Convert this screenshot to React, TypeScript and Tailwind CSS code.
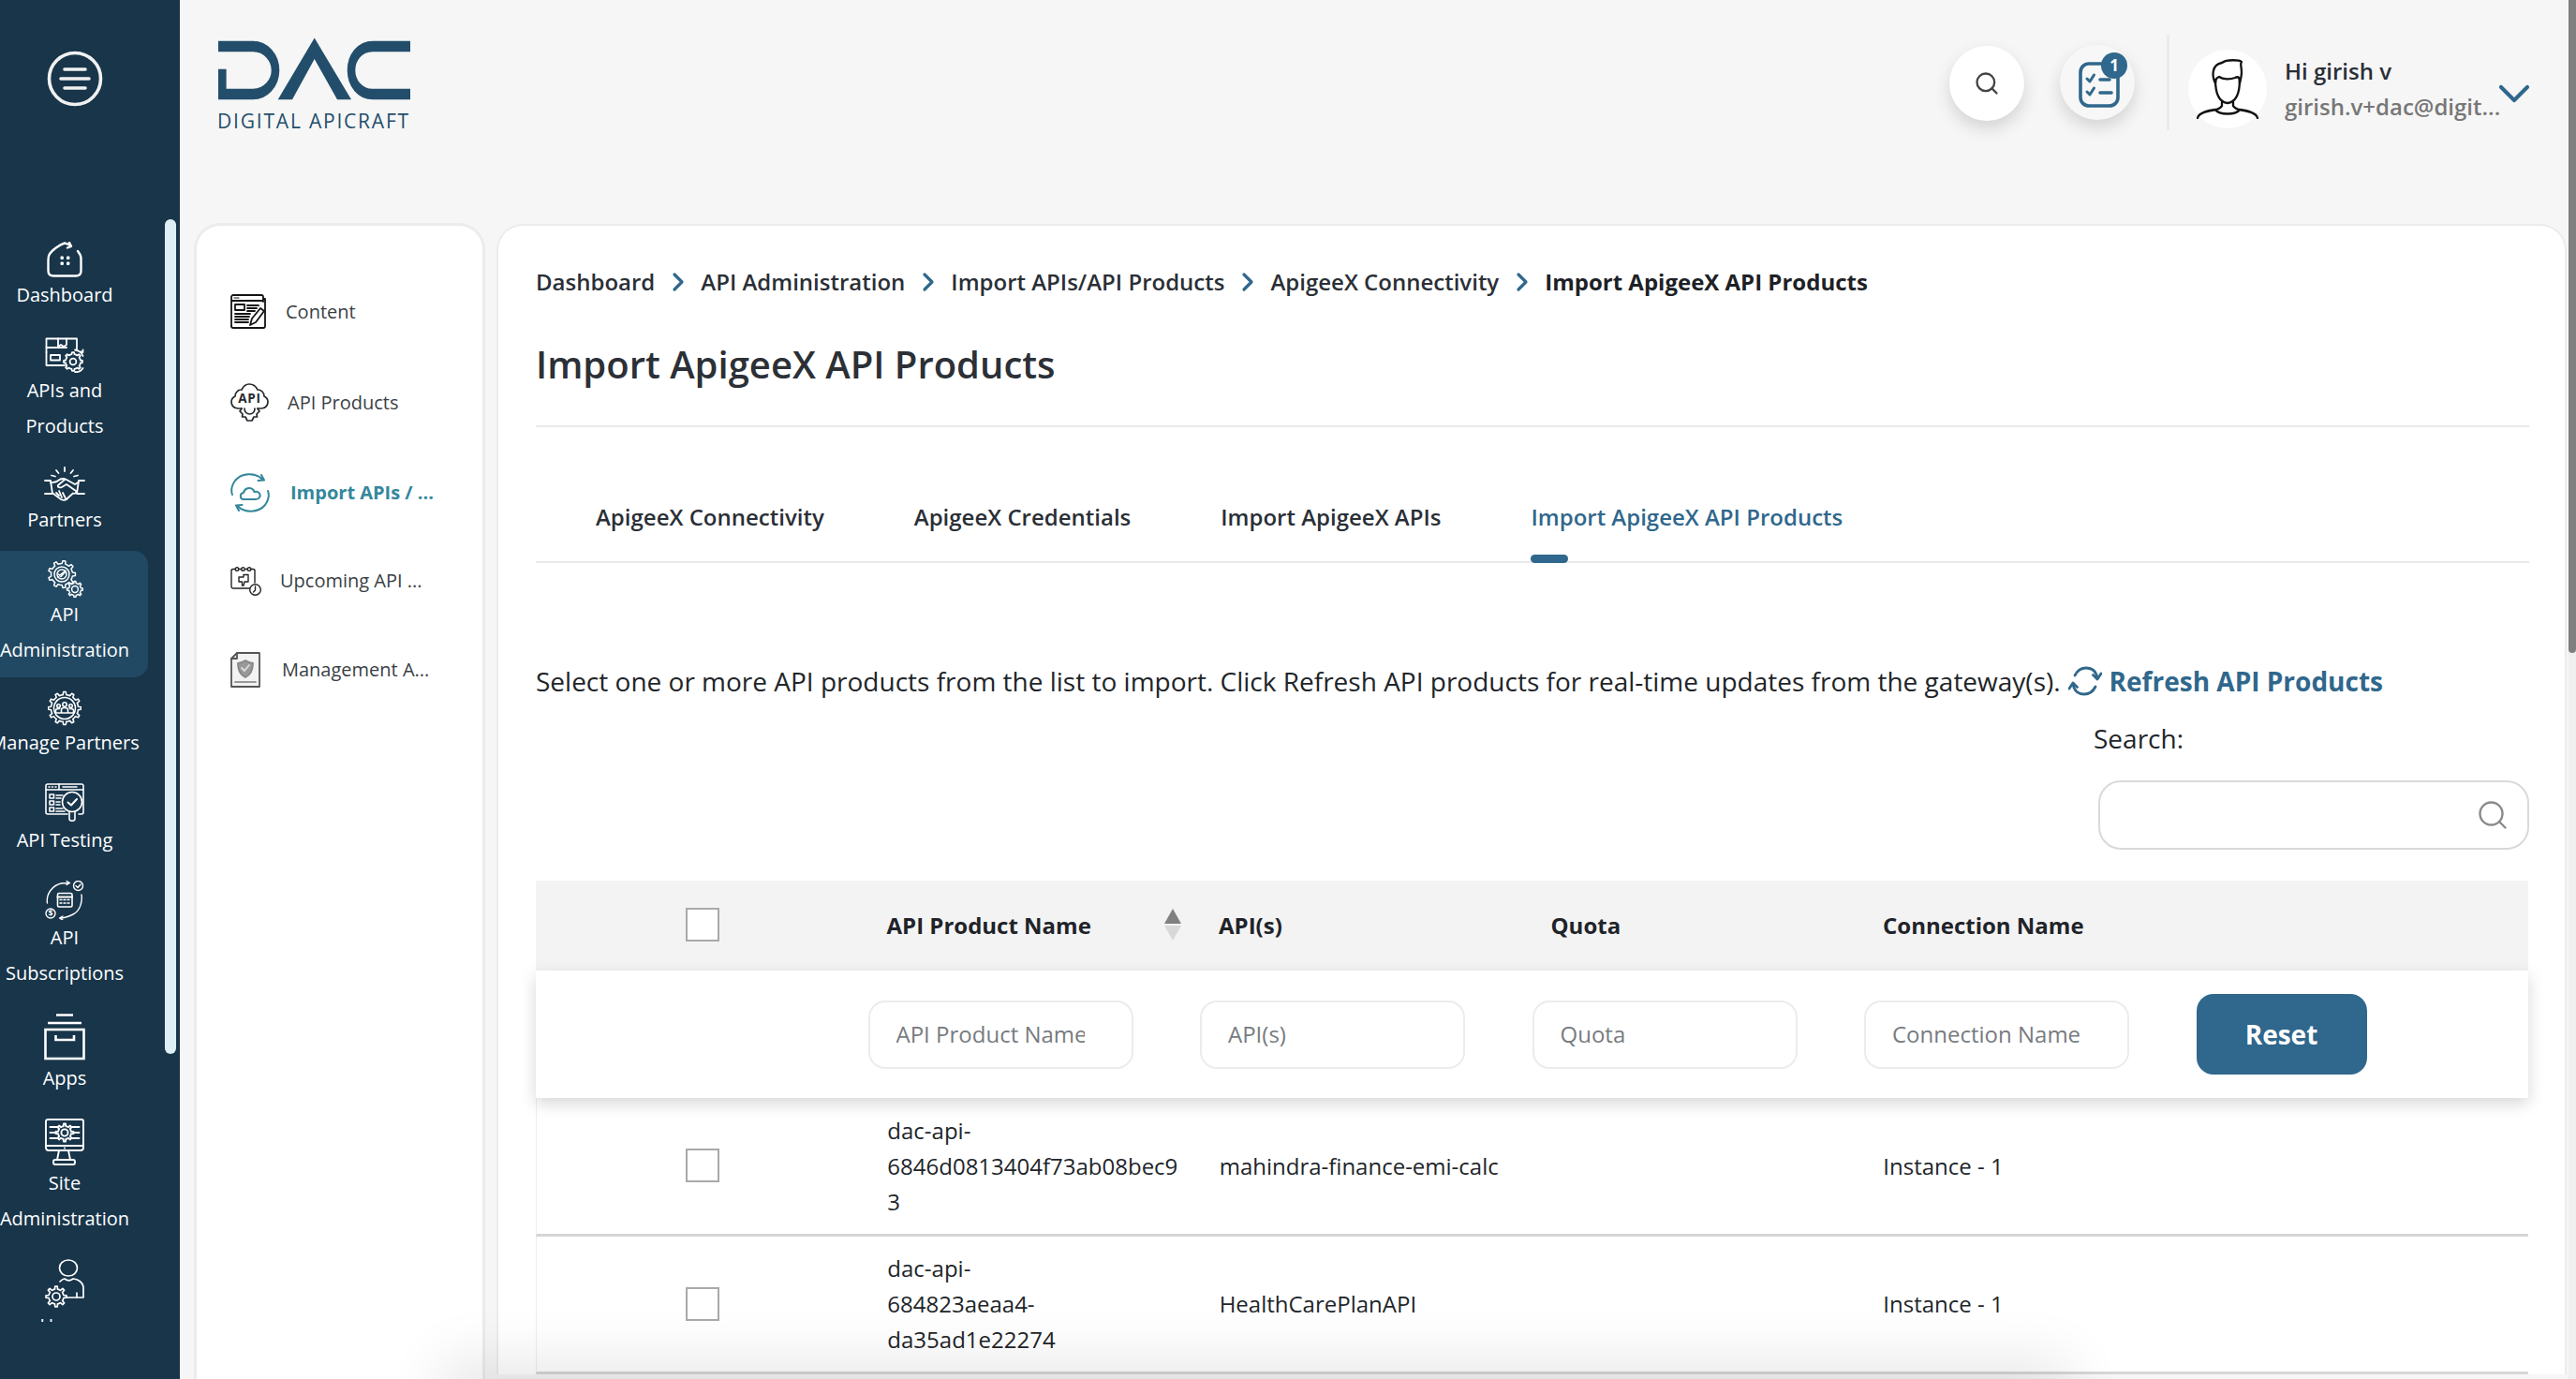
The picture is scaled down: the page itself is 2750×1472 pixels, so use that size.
import { Search, ChevronDown, ChevronRight } from "lucide-react";
import type { ReactNode } from "react";

const gear = (cx: number, cy: number, r1: number, r2: number, teeth: number) => {
  let d = "";
  const step = (Math.PI * 2) / teeth;
  for (let i = 0; i < teeth; i++) {
    const a = i * step;
    const pts = [
      [r1, a - step * 0.5],
      [r1, a - step * 0.24],
      [r2, a - step * 0.14],
      [r2, a + step * 0.14],
      [r1, a + step * 0.24],
    ];
    pts.forEach(([r, t], j) => {
      const x = (cx + r * Math.cos(t)).toFixed(2);
      const y = (cy + r * Math.sin(t)).toFixed(2);
      d += `${i === 0 && j === 0 ? "M" : "L"}${x} ${y} `;
    });
  }
  return d + "Z";
};

const Line = ({ w, h, sw = 2, c = "#fff", children }: { w: number; h: number; sw?: number; c?: string; children: ReactNode }) => (
  <svg width={w} height={h} viewBox={`0 0 ${w} ${h}`} fill="none" stroke={c} strokeWidth={sw} strokeLinecap="round" strokeLinejoin="round">
    {children}
  </svg>
);

const DashboardIcon = () => (
  <Line w={38} h={38} sw={2.4}>
    <path d="M25 4 C22 2.5 20 1.5 19 1.5 C14 3 5 9 2.5 14 C1.5 16 1.5 18 1.5 20 V31 C1.5 34.5 3.5 36.5 7 36.5 H31 C34.5 36.5 36.5 34.5 36.5 31 V18 C36.5 15 35 12.5 33 10" />
    <path d="M24 1 L26 5 L22 6.5" />
    <g fill="#fff" stroke="none">
      <rect x="14.5" y="15.5" width="3.4" height="3.4" rx="1" />
      <rect x="21" y="15.5" width="3.4" height="3.4" rx="1" />
      <rect x="14.5" y="21.5" width="3.4" height="3.4" rx="1" />
      <rect x="21" y="21.5" width="3.4" height="3.4" rx="1" />
    </g>
  </Line>
);

const ApisIcon = () => (
  <Line w={42} h={38} sw={1.8}>
    <path d="M1.5 16 V1.5 H34 V13" />
    <path d="M1.5 11 H23" />
    <path d="M14 1.5 V10 L17 8 L20 10 L23 8 V1.5" />
    <path d="M1.5 16 V30 H21" />
    <rect x="6" y="19" width="10" height="5.5" />
    <path d={gear(30, 26, 8, 10, 8)} />
    <circle cx="30" cy="26" r="3.4" />
    <path d="M32 13.5 C36 14 39.5 17 40.5 20 M38 15.5 L40.5 16 L40.5 13.5 M40.5 33 C38.5 36 35 37.5 32 37" />
  </Line>
);

const PartnersIcon = () => (
  <Line w={44} h={38} sw={1.8}>
    <path d="M22 1 V5 M13 4 L15.5 7 M31 4 L28.5 7 M8 9.5 L12 10.5 M36 9.5 L32 10.5" />
    <path d="M1 15 H7 L9 29 H1 M43 15 H37 L35 29 H43" />
    <path d="M7 17 C10 17 13 17 15 15 C18 12.5 21 12.5 24 14 L33 19 L36.5 17" />
    <path d="M22 14 L15 20 C14 22 17 23 19 22 L24 19 L34 26 C35 28 33 29.5 31 28.5 L26 33 C24 36 21 36.5 18 35 L10 29" />
    <path d="M13 28 L16 31 M16 26 L19 33 M20 28 L23 34" />
  </Line>
);

const AdminIcon = () => (
  <Line w={40} h={40} sw={1.5}>
    <path d={gear(17, 15, 11.5, 14.5, 9)} />
    <circle cx="17" cy="15" r="8" />
    <circle cx="17" cy="15" r="5" />
    <path d="M13.5 15 L16 17.5 L20.5 12.5 M12.5 18 L21 11" />
    <path d={gear(31, 31, 6.5, 8.5, 8)} fill="#224963" />
    <circle cx="31" cy="31" r="3.4" />
  </Line>
);

const ManageIcon = () => (
  <Line w={36} h={38} sw={1.6}>
    <path d={gear(18, 19, 14.5, 17.5, 12)} />
    <circle cx="18" cy="19" r="11.5" />
    <circle cx="18" cy="15" r="2.2" />
    <circle cx="11.5" cy="16.5" r="1.8" />
    <circle cx="24.5" cy="16.5" r="1.8" />
    <path d="M14.5 24 V20.5 C14.5 19 16 18.5 18 18.5 C20 18.5 21.5 19 21.5 20.5 V24 M8.5 24 V21 C8.5 19.7 10 19.5 12.5 19.5 M27.5 24 V21 C27.5 19.7 26 19.5 23.5 19.5 M8 24 H28" />
  </Line>
);

const TestingIcon = () => (
  <Line w={42} h={42} sw={1.6}>
    <path d="M24 33 H3 C2 33 1 32 1 31 V3 C1 2 2 1 3 1 H39 C40 1 41 2 41 3 V31 C41 32 40 33 39 33 H36" />
    <path d="M1 7 H41 M15 1 V7 M19 4 H34" />
    <path d="M4 4 H5 M7.5 4 H8.5 M11 4 H12" />
    <rect x="5" y="12" width="4.5" height="4" />
    <rect x="5" y="19" width="4.5" height="4" />
    <rect x="5" y="26" width="4.5" height="4" />
    <path d="M12 13 H19 M12 16 H17 M12 20 H16 M12 23 H16 M12 27 H19 M12 30 H21" />
    <circle cx="29" cy="20" r="10.5" />
    <path d="M24.5 20.5 L28 23.5 L34 17" strokeWidth="2" />
    <path d="M26 30.5 V38 C26 41 32 41 32 38 V30.5" />
  </Line>
);

const SubsIcon = () => (
  <Line w={42} h={42} sw={1.4}>
    <path d="M2.5 24 C1 14 8 5 18 2.8 L26 2.5 M23 0.5 L26.5 2.5 L23 4.5" />
    <path d="M39 15 C40 22 38 32 30 36 C24 39 20 40 16 40 M19 38 L15.5 40 L19 42" />
    <rect x="13.5" y="13.5" width="15.5" height="14.5" rx="1.5" strokeWidth="1.6" />
    <path d="M13.5 17.5 H29" strokeWidth="2" />
    <path d="M16 20.5 H18 M20 20.5 H22 M24 20.5 H26 M16 24 H18 M20 24 H22 M24 24 H26" />
    <circle cx="35.5" cy="5.5" r="5" />
    <path d="M33 5.5 L35 7.5 L38 4" />
    <circle cx="6" cy="35" r="5" />
    <text x="6" y="38.3" textAnchor="middle" fontSize="9" fontWeight="700" fill="#fff" stroke="none" fontFamily="'Open Sans', sans-serif">$</text>
  </Line>
);

const AppsIcon = () => (
  <Line w={44} h={50} sw={2.6}>
    <g strokeLinecap="butt" strokeLinejoin="miter">
      <path d="M13 1.5 H31 M4 10 H40" />
      <rect x="1.5" y="17" width="41" height="31" />
      <path d="M12.5 23 V28 H32 V23" />
    </g>
  </Line>
);

const SiteIcon = () => (
  <Line w={42} h={50} sw={1.9}>
    <path d="M3 1 H39 C40.5 1 41 2 41 3 V31 C41 33 40 34 38 34 H4 C2 34 1 33 1 31 V3 C1 2 1.5 1 3 1 Z" />
    <path d="M1 29 H41" />
    <path d="M21 31.5 V31.6" />
    <path d="M15 34 L13 44 H27 L25 34" />
    <rect x="9" y="44" width="23" height="5" rx="2" />
    <path d={gear(21, 15, 7, 9.5, 8)} />
    <circle cx="21" cy="15" r="3.6" />
    <path d="M5.5 9 H13 M5.5 15 H11 M5.5 21 H13 M29 9 H36.5 M31 15 H36.5 M29 21 H36.5" />
  </Line>
);

const UsersIcon = () => (
  <Line w={42} h={52} sw={1.7}>
    <ellipse cx="25" cy="9.5" rx="9.5" ry="8.5" />
    <path d="M16 24 C18 22 20 21 21 21 C24 23.5 27 23.5 30 21 C35 21 41 25 41 31 V41 H22" />
    <path d="M34 41 V36" />
    <path d={gear(12, 40, 8, 11, 8)} />
    <circle cx="12" cy="40" r="4" />
  </Line>
);

const navItems = [
  { label: ["Dashboard"], icon: <DashboardIcon />, h: "h-[38px]", extra: "mb-[1px]" },
  { label: ["APIs and", "Products"], icon: <ApisIcon />, h: "h-[39px]" },
  { label: ["Partners"], icon: <PartnersIcon />, h: "h-[38px]" },
  { label: ["API", "Administration"], icon: <AdminIcon />, h: "h-[39px]", active: true },
  { label: ["Manage Partners"], icon: <ManageIcon />, h: "h-[37px]" },
  { label: ["API Testing"], icon: <TestingIcon />, h: "h-[42px]" },
  { label: ["API", "Subscriptions"], icon: <SubsIcon />, h: "h-[42px]" },
  { label: ["Apps"], icon: <AppsIcon />, h: "h-[50px]" },
  { label: ["Site", "Administration"], icon: <SiteIcon />, h: "h-[50px]" },
  { label: ["Users", "Management"], icon: <UsersIcon />, h: "h-[52px]" },
];

const Sidebar = () => (
  <aside className="relative flex w-[192px] shrink-0 flex-col bg-[#18354a] text-white">
    <div className="ml-[15px] flex h-[248px] w-[162px] shrink-0 justify-center pt-[54px] pl-[1px] pr-[33px]">
      <svg width="60" height="60" viewBox="0 0 60 60" fill="none" stroke="#f1f1f1" strokeWidth="3.6" strokeLinecap="round">
        <circle cx="30" cy="30" r="27.5" />
        <path d="M19 20 H41 M15 30 H45 M19 40 H41" />
      </svg>
    </div>
    <nav className="flex h-[1163px] flex-col gap-[4px] overflow-hidden">
      {navItems.map((item) => (
        <div
          key={item.label.join(" ")}
          className={`flex w-[158px] shrink-0 flex-col items-center rounded-r-[15px] py-[10px] pr-[20px] ${item.active ? "bg-[#224963]" : ""} ${item.extra ?? ""}`}
        >
          <div className={`flex items-center justify-center ${item.h}`}>{item.icon}</div>
          {item.label.map((l) => (
            <span key={l} className="whitespace-nowrap text-[20px] leading-[38px]">{l}</span>
          ))}
        </div>
      ))}
    </nav>
    <div className="absolute left-[176px] top-[234px] h-[891px] w-[12px] rounded-full bg-[#dfeff6]" />
  </aside>
);

const ContentIcon = () => (
  <Line w={38} h={38} sw={1.8} c="#141414">
    <path d="M1 34 V3 C1 2 2 1 3 1 H33 C34 1 35 2 35 3 V8 M1 7 H35" />
    <path d="M1 34 C1 35 2 36 3 36 H35 C36 36 37 35 37 34 V5 H35 M26 36" />
    <rect x="5" y="11" width="10" height="6" />
    <path d="M18 12 H30 M18 15 H28 M18 18 H26 M5 21 H21 M5 24 H20 M5 27 H19 M5 30 H19" />
    <path d="M21 33 L23 26 L32 15 L36 18 L27 30 Z" fill="#fff" />
    <path d="M4 4 H9" strokeWidth="1.2" />
  </Line>
);

const ApiProductsIcon = () => (
  <Line w={41} h={42} sw={1.7} c="#26292c">
    <path d="M12 27 H8 C3 27 1 23 1 20 C1 17 3 15 5 14 C5 10 8 7 12 7 C14 3 17 1 20 1 C24 1 27 3 29 7 C33 7 36 10 36 14 C38 15 40 17 40 20 C40 23 38 27 33 27 H29" />
    <text x="20.5" y="20.5" textAnchor="middle" fontSize="13.5" fontWeight="700" fill="#26292c" stroke="none" letterSpacing="0.8" fontFamily="'Open Sans', sans-serif">API</text>
    <path d="M12 27 L10 30 L13 33 L12.5 36 L16 36 L18 40 L23 40 L25 36 L28.5 36 L28 33 L31 30 L29 27" />
    <path d="M15 27 C15 35 26 35 26 27" />
  </Line>
);

const ImportIcon = () => (
  <Line w={42} h={42} sw={2} c="#35879c">
    <path d="M34.5 7 C27 -1 12 -0.5 5 8 C1.5 13 0.5 19 2 23" />
    <path d="M33 2 L36 7.5 L29.5 8" strokeWidth="2" />
    <path d="M7.5 35 C15 43 30 42.5 37 34 C40.5 29 41.5 23 40 19" />
    <path d="M9 40 L6 34.5 L12.5 34" strokeWidth="2" />
    <path d="M14 28 C10 28 9.5 21.5 14 21 C15 16 21 14.5 24 17.5 C25 18.5 25 19 25.5 20 C30 18.5 33 23 31 26 C30 27.5 29 28 27 28 Z" />
  </Line>
);

const UpcomingIcon = () => (
  <Line w={33} h={31} sw={1.4} c="#232323">
    <path d="M24 23 H3 C1.5 23 1 22 1 21 V4 C1 3 1.5 2.5 3 2.5 H24 C25.5 2.5 26 3 26 4 V17" />
    <circle cx="7" cy="2.5" r="1.8" fill="#fff" />
    <circle cx="13.5" cy="2.5" r="1.8" fill="#fff" />
    <circle cx="20" cy="2.5" r="1.8" fill="#fff" />
    <path d="M9 11 H14 V8.5 H19 V16 H15 L14 20 H12.5 L12.5 16 H9 Z" />
    <circle cx="26.5" cy="24.5" r="5.8" fill="#fff" />
    <path d="M26.5 21 V25 L24.5 27" />
  </Line>
);

const ManagementIcon = () => (
  <Line w={32} h={38} sw={1.8} c="#555">
    <path d="M7 1 H31 V37 H1 V7 Z" fill="#f2f2f2" />
    <path d="M7 1 V7 H1" />
    <path d="M5 32 H27" stroke="#999" />
    <path d="M16 9 C19 11 21 11.5 24 12 C24 19 22 24 16 27 C10 24 8 19 8 12 C11 11.5 13 11 16 9 Z" fill="#999" stroke="#888" />
    <path d="M12 17 L15 20 L20 14" stroke="#ddd" />
  </Line>
);

const subItems = [
  { label: "Content", icon: <ContentIcon />, cls: "mt-[73px] gap-[21px]" },
  { label: "API Products", icon: <ApiProductsIcon />, cls: "mt-[59px] gap-[20px]" },
  { label: "Import APIs / ...", icon: <ImportIcon />, cls: "mt-[58px] gap-[22px] font-bold text-[#35879c]" },
  { label: "Upcoming API ...", icon: <UpcomingIcon />, cls: "mt-[56px] gap-[20px]" },
  { label: "Management A...", icon: <ManagementIcon />, cls: "mt-[57px] gap-[23px]" },
];

const SubPanel = () => (
  <div className="mt-[70px] flex w-[311px] shrink-0 flex-col rounded-t-[28px] border-[3px] border-b-0 border-[#ececec] bg-white pl-[36px] text-[20px] text-[#3a3f45]">
    {subItems.map((s) => (
      <div key={s.label} className={`flex h-[38px] items-center whitespace-nowrap ${s.cls}`}>
        {s.icon}
        <span>{s.label}</span>
      </div>
    ))}
  </div>
);

const TasksIcon = () => (
  <svg width="44" height="50" viewBox="0 0 44 50" fill="none" stroke="#30678c" strokeWidth="3.6" strokeLinecap="round" strokeLinejoin="round">
    <rect x="2" y="3" width="40" height="45" rx="9" />
    <path d="M9 19 L12 22 L16.5 15" strokeWidth="3" />
    <path d="M9 33 L12 36 L16.5 29" strokeWidth="3" />
    <path d="M23 20 H33 M23 34 H35" />
  </svg>
);

const Avatar = () => (
  <svg width="66" height="64" viewBox="0 0 66 64" fill="none" stroke="#111" strokeWidth="2.3" strokeLinecap="round" strokeLinejoin="round">
    <path d="M20 22 C20 38 24 46 33 47 C42 46 46 38 46 22" />
    <path d="M20 26 C16 18 16 6 27 4 C32 0 46 1 48 3 C46 5 48 8 48 14 C48 18 47 22 46 26 C46 20 45 18 41 20 C36 22 28 22 24 19 C21 20 20 22 20 26 Z" />
    <path d="M27 46 V50 C26 52 24 53 21 54 C12 55 2 58 1 63" />
    <path d="M39 46 V50 C40 52 42 53 45 54 C54 55 64 58 65 63" />
    <path d="M20 54 C24 60 42 60 46 54" />
  </svg>
);

const Header = () => (
  <header className="flex h-[168px] shrink-0 items-start justify-between pr-[38px]">
    <div className="ml-[40px] mt-[40px] flex w-[208px] flex-col">
      <svg width="208" height="70" viewBox="0 0 208 52" preserveAspectRatio="none" fill="#234e6b" stroke="none">
        <path d="M1 7 H38 C52 7 62 16 62 26 C62 36 52 45 38 45 H5.3 V25" fill="none" stroke="#234e6b" strokeWidth="8.6" strokeLinejoin="miter" />
        <path d="M103.7 0.3 L143 49.3 H128 L103.7 17 L80 49.3 H64.7 Z" />
        <path d="M206 7 H166 C152 7 143 16 143 26 C143 36 152 45 166 45 H206" fill="none" stroke="#234e6b" strokeWidth="8.6" />
      </svg>
      <span className="mt-[6px] whitespace-nowrap text-[21px] leading-[26px] tracking-[1.8px] text-[#234e6b]">DIGITAL APICRAFT</span>
    </div>
    <div className="mt-[37px] flex items-start">
      <div className="mt-[12px] flex h-[80px] w-[80px] items-center justify-center rounded-full bg-white shadow-[0_8px_18px_rgba(0,0,0,0.14)]">
        <Search className="h-[28px] w-[28px] text-[#444]" strokeWidth={2} />
      </div>
      <div className="relative ml-[38px] mt-[11px] flex h-[80px] w-[80px] items-center justify-center rounded-full bg-[#f7f7f7] pl-[3px] pt-[3px] shadow-[0_8px_18px_rgba(0,0,0,0.14)]">
        <TasksIcon />
        <span className="absolute left-[44px] top-[8px] flex h-[28px] w-[28px] items-center justify-center rounded-full bg-[#30678c] text-[17px] font-bold text-white">1</span>
      </div>
      <div className="ml-[34px] h-[102px] w-[3px] bg-[#ebebeb]" />
      <div className="ml-[20px] mt-[16px] flex h-[84px] w-[84px] items-center justify-center rounded-full bg-white">
        <Avatar />
      </div>
      <div className="ml-[19px] mt-[21px] flex w-[232px] flex-col whitespace-nowrap">
        <span className="text-[24px] leading-[36px] font-semibold text-[#2a2f36]">Hi girish v</span>
        <span className="mt-[2px] text-[24px] leading-[36px] font-semibold text-[#777]">girish.v+dac@digit...</span>
      </div>
      <ChevronDown className="ml-[-15px] mt-[35px] h-[56px] w-[56px] text-[#30678c]" strokeWidth={1.8} />
    </div>
  </header>
);

const crumbs = ["Dashboard", "API Administration", "Import APIs/API Products", "ApigeeX Connectivity"];
const tabs = ["ApigeeX Connectivity", "ApigeeX Credentials", "Import ApigeeX APIs"];

const Checkbox = () => <span className="block h-[36px] w-[36px] border-[2.5px] border-[#a9a9a9] bg-white" />;

const rows = [
  { name: ["dac-api-", "6846d0813404f73ab08bec9", "3"], api: "mahindra-finance-emi-calc", conn: "Instance - 1" },
  { name: ["dac-api-", "684823aeaa4-", "da35ad1e22274"], api: "HealthCarePlanAPI", conn: "Instance - 1" },
];

const filters = ["API Product Name", "API(s)", "Quota", "Connection Name"];

const Table = () => (
  <div className="mt-[33px] w-[2127px] text-[24px] text-[#212529]">
    <div className="grid h-[96px] grid-cols-6 items-center bg-[#f3f3f3] font-bold text-[#1f2329]">
      <div className="mb-[2px] flex justify-center pl-[1px]"><Checkbox /></div>
      <div className="relative pl-[20px]">
        API Product Name
        <span className="absolute right-[20px] top-0 flex flex-col items-center gap-[2px]">
          <span className="h-0 w-0 border-x-[9px] border-b-[16px] border-x-transparent border-b-[#808080]" />
          <span className="h-0 w-0 border-x-[9px] border-t-[16px] border-x-transparent border-t-[#d8d8d8]" />
        </span>
      </div>
      <div className="pl-[20px]">API(s)</div>
      <div className="pl-[20px]">Quota</div>
      <div className="pl-[20px]">Connection Name</div>
    </div>
    <div className="relative z-10 grid h-[136px] grid-cols-6 items-center bg-white shadow-[0_6px_16px_rgba(0,0,0,0.16)]">
      <div />
      {filters.map((f) => (
        <div key={f} className="flex h-[73px] w-[283px] items-center rounded-[18px] border-[2px] border-[#ececec] pl-[28px] text-[#777b80]">
          <span className="block w-[201px] overflow-hidden whitespace-nowrap">{f}</span>
        </div>
      ))}
      <button className="flex h-[86px] w-[182px] items-center justify-center rounded-[18px] bg-[#30678c] text-[28px] font-bold text-white">Reset</button>
    </div>
    {rows.map((r) => (
      <div key={r.api} className="grid h-[147.5px] grid-cols-6 items-center border-b-[3px] border-l-[1px] border-b-[#d6d6d6] border-l-[#eeeeee]">
        <div className="flex justify-center"><Checkbox /></div>
        <div className="pl-[20px] pt-[1px] leading-[38px] whitespace-nowrap">
          {r.name.map((n) => <div key={n}>{n}</div>)}
        </div>
        <div className="pl-[20px] pt-[1px] whitespace-nowrap">{r.api}</div>
        <div />
        <div className="pl-[20px] pt-[1px]">{r.conn}</div>
      </div>
    ))}
  </div>
);

const MainCard = () => (
  <main className="mt-[71px] flex w-[2210px] shrink-0 flex-col rounded-t-[28px] border-[2px] border-b-0 border-[#ececec] bg-white pl-[40px] text-[#212529]">
    <nav className="mt-[42px] flex h-[36px] items-center text-[24px] leading-[36px] font-semibold whitespace-nowrap text-[#2a2f36]">
      {crumbs.map((c) => (
        <div key={c} className="flex items-center">
          <span>{c}</span>
          <ChevronRight className="mx-[8.5px] h-[32px] w-[32px] text-[#30678c]" strokeWidth={2.4} />
        </div>
      ))}
      <span className="font-bold text-[#1d2126]">Import ApigeeX API Products</span>
    </nav>
    <h1 className="mt-[40px] text-[40px] leading-[60px] font-semibold text-[#2c3036]">Import ApigeeX API Products</h1>
    <div className="mt-[35px] h-[2px] w-[2128px] bg-[#e9e9e9]" />
    <div className="flex h-[145px] w-[2128px] items-end border-b-[2px] border-[#e9e9e9] pl-[64px] text-[24px] font-semibold whitespace-nowrap text-[#2a2f36]">
      <div className="flex gap-[96px]">
        {tabs.map((t) => <span key={t} className="mb-[29px] leading-[36px]">{t}</span>)}
        <span className="relative mb-[29px] leading-[36px] text-[#30678c]">
          Import ApigeeX API Products
          <span className="absolute left-0 top-[58px] h-[9px] w-[40px] rounded-full bg-[#30678c]" />
        </span>
      </div>
    </div>
    <div className="mt-[106px] flex h-[40px] items-center whitespace-nowrap text-[28px] text-[#212529]">
      <span>Select one or more API products from the list to import. Click Refresh API products for real-time updates from the gateway(s).</span>
      <svg className="ml-[8px]" width="36" height="32" viewBox="0 0 36 32" fill="none" stroke="#30678c" strokeWidth="2.8" strokeLinecap="round" strokeLinejoin="round">
        <path d="M7 10 C10 4 15 2 19 2 C24 2 28 4 30 9 L31 13" />
        <path d="M35 8 L31 14 L26.5 9.5" />
        <path d="M29 22 C26 28 21 30 17 30 C12 30 8 28 6 23 L5 19" />
        <path d="M1 24 L5 18 L9.5 22.5" />
      </svg>
      <span className="ml-[8px] font-bold text-[#30678c]">Refresh API Products</span>
    </div>
    <div className="ml-[1663px] mt-[21px] h-[40px] text-[28px] leading-[40px]">Search:</div>
    <div className="ml-[1668px] mt-[25px] flex h-[74px] w-[460px] items-center justify-end rounded-[24px] border-[2px] border-[#d9d9d9] pr-[19px]">
      <Search className="h-[36px] w-[36px] text-[#8a8a8a]" strokeWidth={1.6} />
    </div>
    <Table />
  </main>
);

export default function App() {
  return (
    <div className="relative flex h-[1472px] w-[2750px] overflow-hidden bg-[#f6f6f6] font-['Open_Sans',sans-serif]">
      <Sidebar />
      <div className="flex min-w-0 flex-1 flex-col">
        <Header />
        <div className="flex flex-1 pl-[15px]">
          <SubPanel />
          <div className="ml-[12px]">
            <MainCard />
          </div>
        </div>
      </div>
      {/* page scrollbar */}
      <div className="absolute right-0 top-0 h-full w-[8px] bg-[#efefef]">
        <div className="h-[697px] w-full rounded-b-[4px] bg-[#7f7f7f]" />
      </div>
      {/* soft shadow rising from below the fold */}
      <div className="absolute left-[500px] top-[1480px] h-[40px] w-[1680px] shadow-[0_0_60px_30px_rgba(0,0,0,0.09)]" />
    </div>
  );
}
